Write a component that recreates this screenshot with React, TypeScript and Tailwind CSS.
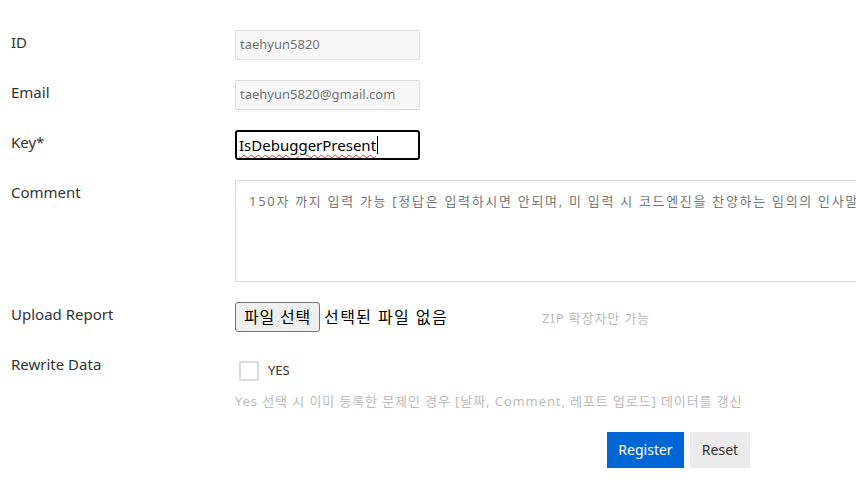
import React from "react";

const font = { fontFamily: '"Noto Sans", "Noto Sans CJK KR", sans-serif' };

function Label({ children, pt = "pt-[2px]" }: { children: React.ReactNode; pt?: string }) {
  return <div className={`w-[235px] shrink-0 pl-[11px] text-[15px] leading-[20px] text-[#333] ${pt}`}>{children}</div>;
}

export default function App() {
  return (
    <div className="w-[856px] h-[500px] overflow-hidden bg-white" style={font}>
      <div className="pt-[30px] flex flex-col">
        <div className="flex h-[30px]">
          <Label>ID</Label>
          <div className="w-[185px] h-[30px] border border-[#dcdcdc] bg-[#f7f7f7] rounded-[2px] px-[4px] flex items-center text-[13px] text-[#757575]">taehyun5820</div>
        </div>
        <div className="flex h-[30px] mt-[20px]">
          <Label>Email</Label>
          <div className="w-[185px] h-[30px] border border-[#dcdcdc] bg-[#f7f7f7] rounded-[2px] px-[4px] flex items-center text-[13px] text-[#757575]">taehyun5820@gmail.com</div>
        </div>
        <div className="flex h-[30px] mt-[20px]">
          <Label>Key*</Label>
          <div className="w-[185px] h-[30px] border-2 border-black bg-white rounded-[3px] px-[2px] flex items-center text-[15px] text-black">
            <span className="underline decoration-wavy decoration-[#e33] decoration-1 underline-offset-[3px]">IsDebuggerPresent</span>
            <span className="w-px h-[18px] bg-black ml-px" />
          </div>
        </div>
        <div className="flex mt-[20px]">
          <Label>Comment</Label>
          <div className="w-[660px] shrink-0 h-[102px] border border-[#dcdcdc] bg-white pl-[13px] pt-[11px] text-[13px] tracking-[1.7px] text-[#777] whitespace-nowrap overflow-hidden">
            150자 까지 입력 가능 [정답은 입력하시면 안되며, 미 입력 시 코드엔진을 찬양하는 임의의 인사말이 입력됩니다]
          </div>
        </div>
        <div className="flex mt-[20px] items-start">
          <Label>Upload Report</Label>
          <div className="flex items-center h-[30px]">
            <button className="h-[30px] px-[8px] border border-[#767676] bg-[#efefef] rounded-[3px] text-[16px] tracking-[0.8px] text-black leading-none">파일 선택</button>
            <span className="ml-[4px] text-[16px] tracking-[1.4px] text-black">선택된 파일 없음</span>
            <span className="ml-[94px] mt-[3px] text-[13px] tracking-[0.9px] text-[#bbb]">ZIP 확장자만 가능</span>
          </div>
        </div>
        <div className="flex mt-[22px]">
          <Label pt="pt-0">Rewrite Data</Label>
          <div className="flex flex-col">
            <div className="flex items-center pl-[4px] pt-[7px]">
              <span className="w-[20px] h-[20px] border-2 border-[#ddd] bg-white" />
              <span className="ml-[9px] text-[13px] text-[#333]">YES</span>
            </div>
            <div className="mt-[11px] text-[13px] tracking-[0.9px] text-[#bbb] whitespace-nowrap">Yes 선택 시 이미 등록한 문제인 경우 [날짜, Comment, 레포트 업로드] 데이터를 갱신</div>
          </div>
        </div>
        <div className="flex mt-[20px] pl-[607px] gap-[6px]">
          <button className="w-[77px] h-[36px] bg-[#0066d6] text-white text-[14px]">Register</button>
          <button className="w-[60px] h-[36px] bg-[#ebebeb] text-[#333] text-[14px]">Reset</button>
        </div>
      </div>
    </div>
  );
}
